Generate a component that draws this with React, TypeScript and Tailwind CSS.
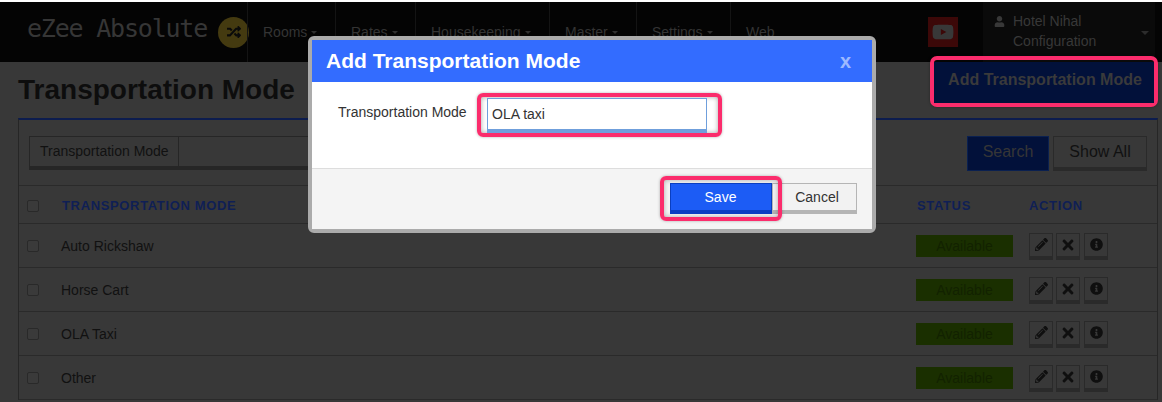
import React from "react";
import { FaPencilAlt, FaTimes, FaInfoCircle, FaRandom, FaYoutube, FaUser } from "react-icons/fa";

const rows = ["Auto Rickshaw", "Horse Cart", "OLA Taxi", "Other"];
const nav = [
  { t: "Rooms", w: "w-[88px]", c: true },
  { t: "Rates", w: "w-[80px]", c: true },
  { t: "Housekeeping", w: "w-[134px]", c: true },
  { t: "Master", w: "w-[87px]", c: true },
  { t: "Settings", w: "w-[94px]", c: true },
  { t: "Web", w: "w-[60px]", c: false },
];

function Caret() {
  return <span className="inline-block ml-[4px] align-middle w-0 h-0 border-x-[3px] border-x-transparent border-t-[3px] border-t-[#2e2e2e]" />;
}

function Check() {
  return <span className="block w-[12px] h-[12px] rounded-[2px] border border-[#292929] bg-[#3a3a3a]" />;
}

function ActionBtn({ children, className = "" }: { children: React.ReactNode; className?: string }) {
  return (
    <span className={`flex items-center justify-center w-[24px] h-[27px] border border-[#2a2a2a] border-b-[4px] text-[#0f0f0f] text-[13px] ${className}`}>
      {children}
    </span>
  );
}

export default function App() {
  return (
    <div className="relative w-[1162px] h-[402px] overflow-hidden bg-[#383838] font-['Liberation_Sans',Arial,sans-serif] border-t-[2px] border-t-white">
      <header className="h-[60px] bg-[#040404] flex items-stretch">
        <div className="w-[247px] flex items-center pl-[27px] shrink-0">
          <span className="mb-[7px] font-['DejaVu_Sans_Mono',monospace] text-[25px] tracking-[-1.2px] text-[#363636] leading-none whitespace-nowrap">eZee Absolute</span>
          <span className="ml-[11px] w-[31px] h-[31px] shrink-0 rounded-full bg-[#443a10] flex items-center justify-center text-[#0a0a0a] text-[14px]">
            <FaRandom />
          </span>
        </div>
        {nav.map((n) => (
          <div key={n.t} className={`${n.w} border-l border-l-[#141414] flex items-center pl-[15px] text-[14px] text-[#343434] whitespace-nowrap`}>
            {n.t}
            {n.c && <Caret />}
          </div>
        ))}
        <div className="flex-1 flex items-center justify-end pr-[25px]">
          <span className="w-[30px] h-[30px] bg-[#3c0808] flex items-center justify-center text-[#383838] text-[22px]">
            <FaYoutube />
          </span>
        </div>
        <div className="relative w-[172px] mr-[7px] bg-[#0a0a0a] pl-[30px] pt-[9px] text-[14px] leading-[20px] text-[#383838]">
          <span className="absolute left-[11px] top-[14px] text-[11px] text-[#383838]"><FaUser /></span>
          <div>Hotel Nihal</div>
          <div>Configuration</div>
          <span className="absolute right-[6px] top-[29px] w-0 h-0 border-x-[4px] border-x-transparent border-t-[4px] border-t-[#2c2c2c]" />
        </div>
      </header>

      <div className="flex items-start justify-between h-[56px] pl-[18px] pr-[4px]">
        <h1 className="mt-[12px] text-[28px] leading-[32px] font-bold text-[#0d0d0d] whitespace-nowrap">Transportation Mode</h1>
        <div className="mt-[-6px] w-[228px] h-[51px] rounded-[7px] border-[4px] border-[#fb2c6c] shadow-[0_0_3px_rgba(0,0,0,0.35)] relative z-10 pt-[2px]">
          <div className="h-full bg-[#02113a] flex items-center justify-center pb-[5px] pl-[2px] text-[16px] font-bold text-[#3a3a3a] whitespace-nowrap">
            Add Transportation Mode
          </div>
        </div>
      </div>

      <section className="ml-[18px] w-[1140px] border-t-[2px] border-t-[#0c1c4e] border-x border-x-[#262626]">
        <div className="h-[66px] border-b border-b-[#2a2a2a] flex items-start pt-[16px] pl-[10px] pr-[10px]">
          <div className="w-[290px] h-[34px] flex border border-[#262626] border-b-[4px] border-r-0">
            <span className="w-[149px] h-full border-r border-r-[#262626] text-[14px] leading-[28px] pl-[10px] text-[#111]">Transportation Mode</span>
          </div>
          <div className="ml-auto flex gap-[4px]">
            <span className="w-[82px] h-[35px] pb-[4px] bg-[#02113a] border border-[#0a2050] flex items-center justify-center text-[16px] text-[#363636]">Search</span>
            <span className="w-[94px] h-[35px] border border-[#2a2a2a] border-b-[4px] flex items-center justify-center text-[16px] text-[#111]">Show All</span>
          </div>
        </div>
        <div className="h-[38px] pt-[2px] flex items-center border-b border-b-[#2a2a2a] text-[13px] font-bold tracking-[0.65px]">
          <span className="ml-[8px] w-[35px] shrink-0"><Check /></span>
          <span className="flex-1 text-[#0f1f55]">TRANSPORTATION MODE</span>
          <span className="w-[113px] pl-[1px] text-[#0f1f55]">STATUS</span>
          <span className="w-[128px] text-[#0f1f55]">ACTION</span>
        </div>
        {rows.map((r) => (
          <div key={r} className="h-[44px] pt-[1px] flex items-center border-b border-b-[#2a2a2a] text-[14px] text-[#111]">
            <span className="ml-[8px] w-[34px] shrink-0"><Check /></span>
            <span className="flex-1">{r}</span>
            <div className="w-[113px] shrink-0">
              <span className="w-[97px] h-[22px] bg-[#1a2f00] flex items-center justify-center text-[#122200]">Available</span>
            </div>
            <div className="w-[128px] shrink-0 flex gap-[3px]">
              <ActionBtn><FaPencilAlt /></ActionBtn>
              <ActionBtn className="text-[16px]"><FaTimes /></ActionBtn>
              <ActionBtn className="ml-[1px]"><FaInfoCircle /></ActionBtn>
            </div>
          </div>
        ))}
      </section>

      <div className="absolute left-[308px] top-[34px] w-[568px] h-[197px] rounded-[6px] border-[4px] border-[#ababab] bg-white flex flex-col z-20">
        <div className="h-[42px] shrink-0 bg-[#336cff] flex items-center justify-between pl-[14px] pr-[21px]">
          <span className="text-[21px] font-bold text-white">Add Transportation Mode</span>
          <span className="text-[20px] font-bold text-[#9db9ff]">x</span>
        </div>
        <div className="h-[87px] shrink-0 bg-white border-b border-b-[#dddddd] flex items-start pl-[26px] pt-[11px]">
          <label className="w-[139px] text-[14px] leading-[20px] mt-[9px] text-[#333]">Transportation Mode</label>
          <div className="w-[245px] h-[44px] rounded-[6px] border-[4px] border-[#fb2c6c] pl-[6px] pr-[11px] pt-[1px] shadow-[0_0_3px_rgba(0,0,0,0.3),inset_0_0_5px_rgba(0,0,0,0.35)]">
            <div className="h-[35px] bg-white border border-[#6f9fdc] border-b-[4px] pl-[4px] text-[14px] leading-[30px] text-[#333]">OLA taxi</div>
          </div>
        </div>
        <div className="flex-1 bg-[#f4f4f4] flex items-start pl-[348px] pt-[7px]">
          <div className="w-[122px] h-[45px] rounded-[6px] border-[4px] border-[#fb2c6c] pl-[6px] pt-[3px] relative z-10 shadow-[0_0_3px_rgba(0,0,0,0.3),inset_0_0_5px_rgba(0,0,0,0.3)]">
            <div className="w-[102px] h-[31px] pr-[1px] bg-[#1c5cf5] border border-[#0a3fc0] border-b-[4px] border-b-[#0a3ec2] flex items-center justify-center text-[14px] text-white">Save</div>
          </div>
          <div className="ml-[-10px] w-[85px] h-[31px] mt-[7px] pl-[5px] bg-[#f2f2f2] border border-[#b5b5b5] border-b-[4px] flex items-center justify-center text-[14px] text-[#333]">Cancel</div>
        </div>
      </div>
    </div>
  );
}
